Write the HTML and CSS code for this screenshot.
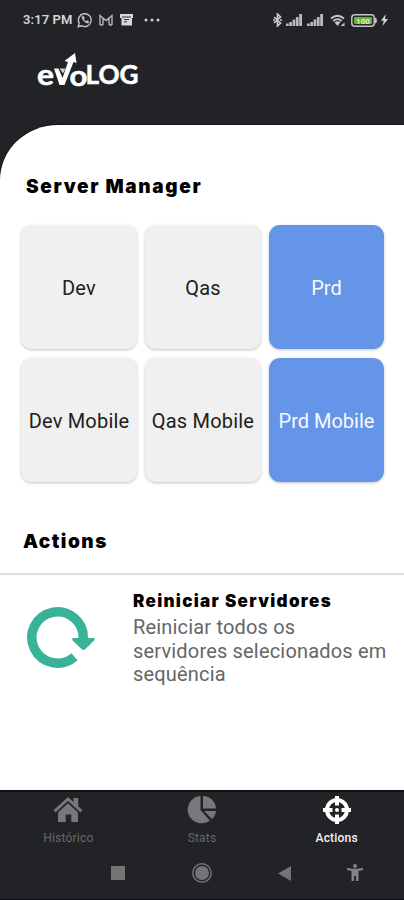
FILE: index.html
```
<!DOCTYPE html>
<html lang="pt">
<head>
<meta charset="utf-8">
<title>evoLOG</title>
<link rel="stylesheet" href="styles.css">
</head>
<body>
<div class="app">
  <header class="top">
    <div class="status">
      <span class="time">3:17 PM</span>
      <svg class="whatsapp" width="16" height="16" viewBox="0 0 16 16" fill="none" stroke="#c4c5c7" stroke-width="1.4"><path d="M1.2 14.8l1-3.6A6.4 6.4 0 1 1 4.9 13.8z"/><path d="M5 4.5c0 3.5 3 6.5 6.3 6.6l.6-1.6-2-1-.9.9C7.900 8.900 7 8 6.600 7l.8-.9-.9-1.900z" fill="#c4c5c7" stroke-width=".6"/></svg>
      <svg class="mail" width="14" height="12" viewBox="0 0 14 12" fill="none" stroke="#b4b5b7" stroke-width="1.4"><path d="M1 11V1.500l6 5 6-5V11M4 11V4M10 11V4M1 11h3M10 11h3"/></svg>
      <svg class="store" width="13" height="12" viewBox="0 0 13 12"><path d="M0 0h13v4h-1v7.500H1.500V4H0z" fill="#d8d8d9"/><path d="M2 3h9M4 5.500h5M4 7.800h3" stroke="#34353a"/></svg>
      <svg class="dots" width="16" height="4" viewBox="0 0 16 4" fill="#d0d1d2"><circle cx="2" cy="2" r="1.500"/><circle cx="8" cy="2" r="1.500"/><circle cx="14" cy="2" r="1.500"/></svg>
      <svg class="bt" width="9" height="14" viewBox="0 0 9 14" fill="none" stroke="#c8c9ca" stroke-width="1.700"><path d="M1 4l6.500 6L4.500 13V1l3 3L1 10M0 7h2M7 7h2"/></svg>
      <svg class="sig" width="16" height="12" viewBox="0 0 16 12" fill="#b9babc"><path d="M0 9.500h2.700V12H0zM3.300 8h2.700v4H3.300zM6.600 5.500h2.700V12H6.600zM9.900 3h2.700v9H9.900zM13.200 0H16v12h-2.800z"/></svg>
      <svg class="sig" width="16" height="12" viewBox="0 0 16 12" fill="#b9babc"><path d="M0 9.500h2.700V12H0zM3.300 8h2.700v4H3.300zM6.600 5.500h2.700V12H6.600zM9.900 3h2.700v9H9.900zM13.200 0H16v12h-2.800z"/></svg>
      <svg class="wifi" width="15" height="13" viewBox="0 0 15 13" fill="none" stroke="#c4c5c7" stroke-width="1.800"><path d="M1 4.500Q7.500-1 14 4.500M3.200 7Q7.500 3.200 11.800 7"/><path d="M4.500 8.300Q7.500 6 10.500 8.300L7.500 12z" fill="#c4c5c7" stroke="none"/><path d="M10.500 12L14.500 8.500V12z" fill="#c4c5c7" stroke="none"/></svg>
      <svg class="battery" width="26" height="13" viewBox="0 0 26 13"><rect x=".8" y=".8" width="22.400" height="11.400" rx="3" fill="#24262a" stroke="#c2c3c4" stroke-width="1.500"/><path d="M24 3.500Q26 4 26 6.500T24 9.500z" fill="#c2c3c4"/><rect x="3" y="3" width="18" height="7" rx="1" fill="#62b52d"/><text x="12" y="9.500" text-anchor="middle" class="charge">100</text></svg>
      <svg class="bolt" width="7" height="12" viewBox="0 0 7 12"><path d="M4.800 0L0 6.800h2.800L1.500 12 7 5H4z" fill="#d4d4d5"/></svg>
    </div>
    <div class="logo">
      <svg width="104" height="38" viewBox="0 0 104 38">
        <text x="0" y="31.500" class="logo-text small" textLength="17" lengthAdjust="spacingAndGlyphs">e</text>
        <text x="32.500" y="32.500" class="logo-text small" textLength="18" lengthAdjust="spacingAndGlyphs">o</text>
        <text x="48.500" y="31" class="logo-text" textLength="53" lengthAdjust="spacingAndGlyphs">LOG</text>
        <path d="M17 15.500h4.500l4 9.500 5.500-16-3.500-1L38 0l1.500 10-3-1L27.500 32h-5z" fill="#fff"/>
        <path d="M22.500 15.500h6l-2.500 5z" fill="#d0d0d2"/>
      </svg>
    </div>
  </header>
  <main class="sheet">
    <h1 class="title servers-title">Server Manager</h1>
    <div class="grid">
      <div class="tile">Dev</div><div class="tile">Qas</div><div class="tile on">Prd</div>
      <div class="tile">Dev Mobile</div><div class="tile">Qas Mobile</div><div class="tile on">Prd Mobile</div>
    </div>
    <h2 class="title actions-title">Actions</h2>
    <section class="action">
      <svg class="restart" width="70" height="64" viewBox="0 0 70 64"><path d="M48.500 51.800A25.700 25.700 0 1 1 57.200 34" fill="none" stroke="#38b397" stroke-width="9.500"/><path d="M48 33h19q3 0 1 2.500L59.500 44q-2 2-4 0L46.800 35.700Q45 33 48 33z" fill="#38b397"/></svg>
      <div class="copy">
        <h3 class="action-name">Reiniciar Servidores</h3>
        <p class="desc">Reiniciar todos os<br>servidores selecionados em<br>sequência</p>
      </div>
    </section>
  </main>
  <footer class="bottom">
    <nav class="tabs">
      <div class="tab"><svg width="30" height="26" viewBox="0 0 30 26" fill="#77787a"><path d="M15 0l5.500 5V1h4.700v8.200l4.300 4-2 2.300L15 4 2.500 15.500l-2-2.300z"/><path d="M15 6.300l10 9.200V25h-6.700v-7.500h-5.600V25H5v-9.500z"/></svg><span>Histórico</span></div>
      <div class="tab"><svg width="30" height="28" viewBox="0 0 30 28" fill="#77787a"><path d="M13.500 0A13.700 13.700 0 1 0 22.800 24.500L13.500 14z"/><path d="M16 0A13 13 0 0 1 29 12.500H16zM17 15h12q-.3 4.500-4 8z"/></svg><span>Stats</span></div>
      <div class="tab active"><svg width="28" height="28" viewBox="0 0 28 28" fill="none" stroke="#fff"><circle cx="14" cy="14" r="10" stroke-width="4"/><path d="M14 0v9.500M14 18.500V28M0 14h9.500M18.500 14H28" stroke-width="4"/><circle cx="14" cy="14" r="2" fill="#fff" stroke="none"/></svg><span>Actions</span></div>
    </nav>
    <div class="system">
      <svg width="14" height="14" viewBox="0 0 14 14"><path d="M0 0h14v14H0z" fill="#737476"/></svg>
      <svg width="20" height="20" viewBox="0 0 20 20"><circle cx="10" cy="10" r="9.200" fill="none" stroke="#737476" stroke-width="1.500"/><circle cx="10" cy="10" r="7" fill="#737476"/></svg>
      <svg width="13" height="15" viewBox="0 0 13 15"><path d="M0 7.500L13 0v15z" fill="#737476"/></svg>
      <svg width="16" height="18" viewBox="0 0 16 18" fill="#838486"><circle cx="8" cy="2" r="2"/><path d="M0 4l6 .8h4L16 4v2l-4.500 1v10H9v-5H7v5H4.500V7L0 6z"/></svg>
    </div>
  </footer>
</div>
</body>
</html>
```
FILE: styles.css
```
* { box-sizing: border-box; }
body { margin: 0; font-family: Roboto, sans-serif; background: #222327; }
svg { display: block; flex: none; }
h1, h2, h3, p { margin: 0; }
.app { width: 404px; height: 900px; display: flex; flex-direction: column; overflow: hidden; background: #222327; }
.top { height: 125px; flex: none; }
.status { height: 40px; display: flex; align-items: center; padding-left: 23px; }
.time { width: 49px; font: 600 13px/16px Roboto, sans-serif; color: #d4d5d6; white-space: nowrap; letter-spacing: .1px; }
.whatsapp { margin-left: 5px; }
.mail { margin-left: 6px; }
.store { margin-left: 7px; }
.dots { margin-left: 11px; }
.bt { margin-left: 113px; }
.sig { margin-left: 4px; }
.sig + .sig { margin-left: 5px; }
.wifi { margin-left: 7px; }
.battery { margin-left: 6px; }
.bolt { margin-left: 4px; }
.charge { font: 700 8px Roboto, sans-serif; fill: #dfeeda; }
.logo { padding: 13px 0 0 37px; }
.logo-text { font: 700 26.500px Lato, sans-serif; fill: #fff; stroke: #fff; stroke-width: .5px; }
.logo-text.small { font-size: 29px; }
.sheet { flex: 1; min-height: 0; background: #fff; border-top-left-radius: 58px 55px; box-shadow: 0 0 0 1px #101114; }
.title { font-family: Inter, sans-serif; font-weight: 900; font-size: 19px; line-height: 24px; color: #000; }
.servers-title { padding: 50px 0 0 26px; letter-spacing: 1.650px; }
.grid { display: grid; grid-template-columns: 116px 116px 115px; grid-auto-rows: 124px; gap: 9px 8px; padding: 26px 0 0 21px; }
.tile { display: flex; align-items: center; justify-content: center; border-radius: 11px; background: #f0f0f0; color: #202020; font-size: 20px; letter-spacing: .2px; padding-top: 2px; white-space: nowrap; box-shadow: 0 1px 3px rgba(0,0,0,.24); }
.tile.on { background: #6495e9; color: #f7f9ff; letter-spacing: 0; }
.actions-title { padding: 48px 0 0 23px; letter-spacing: 1.500px; }
.action { margin-top: 19px; border-top: 2px solid #dedede; display: flex; padding: 15px 0 0 26px; }
.restart { margin-top: 15px; }
.copy { margin-left: 37px; }
.action-name { font: 900 17px/22px Inter, sans-serif; letter-spacing: 1.320px; color: #000; white-space: nowrap; }
.desc { margin-top: 4px; font-size: 20px; line-height: 23.500px; color: #666; font-weight: 400; letter-spacing: .18px; white-space: nowrap; }
.bottom { height: 110px; flex: none; border-top: 2px solid #101114; border-bottom: 1px solid #14071c; background: #222327; }
.tabs { height: 62px; display: grid; grid-template-columns: 1fr 1fr 1fr; }
.tab { display: flex; flex-direction: column; align-items: center; padding-top: 4px; font-size: 12px; line-height: 14px; color: #66676a; }
.tab svg { height: 28px; }
.tab span { margin-top: 7px; letter-spacing: .2px; }
.tab:first-child { padding-left: 2px; }
.tab.active { color: #f2f2f2; font-weight: 500; }
.system { height: 38px; display: flex; align-items: center; padding-left: 111px; }
.system svg:nth-child(2) { margin-left: 67px; }
.system svg:nth-child(3) { margin-left: 66px; }
.system svg:nth-child(4) { margin-left: 56px; }
```
